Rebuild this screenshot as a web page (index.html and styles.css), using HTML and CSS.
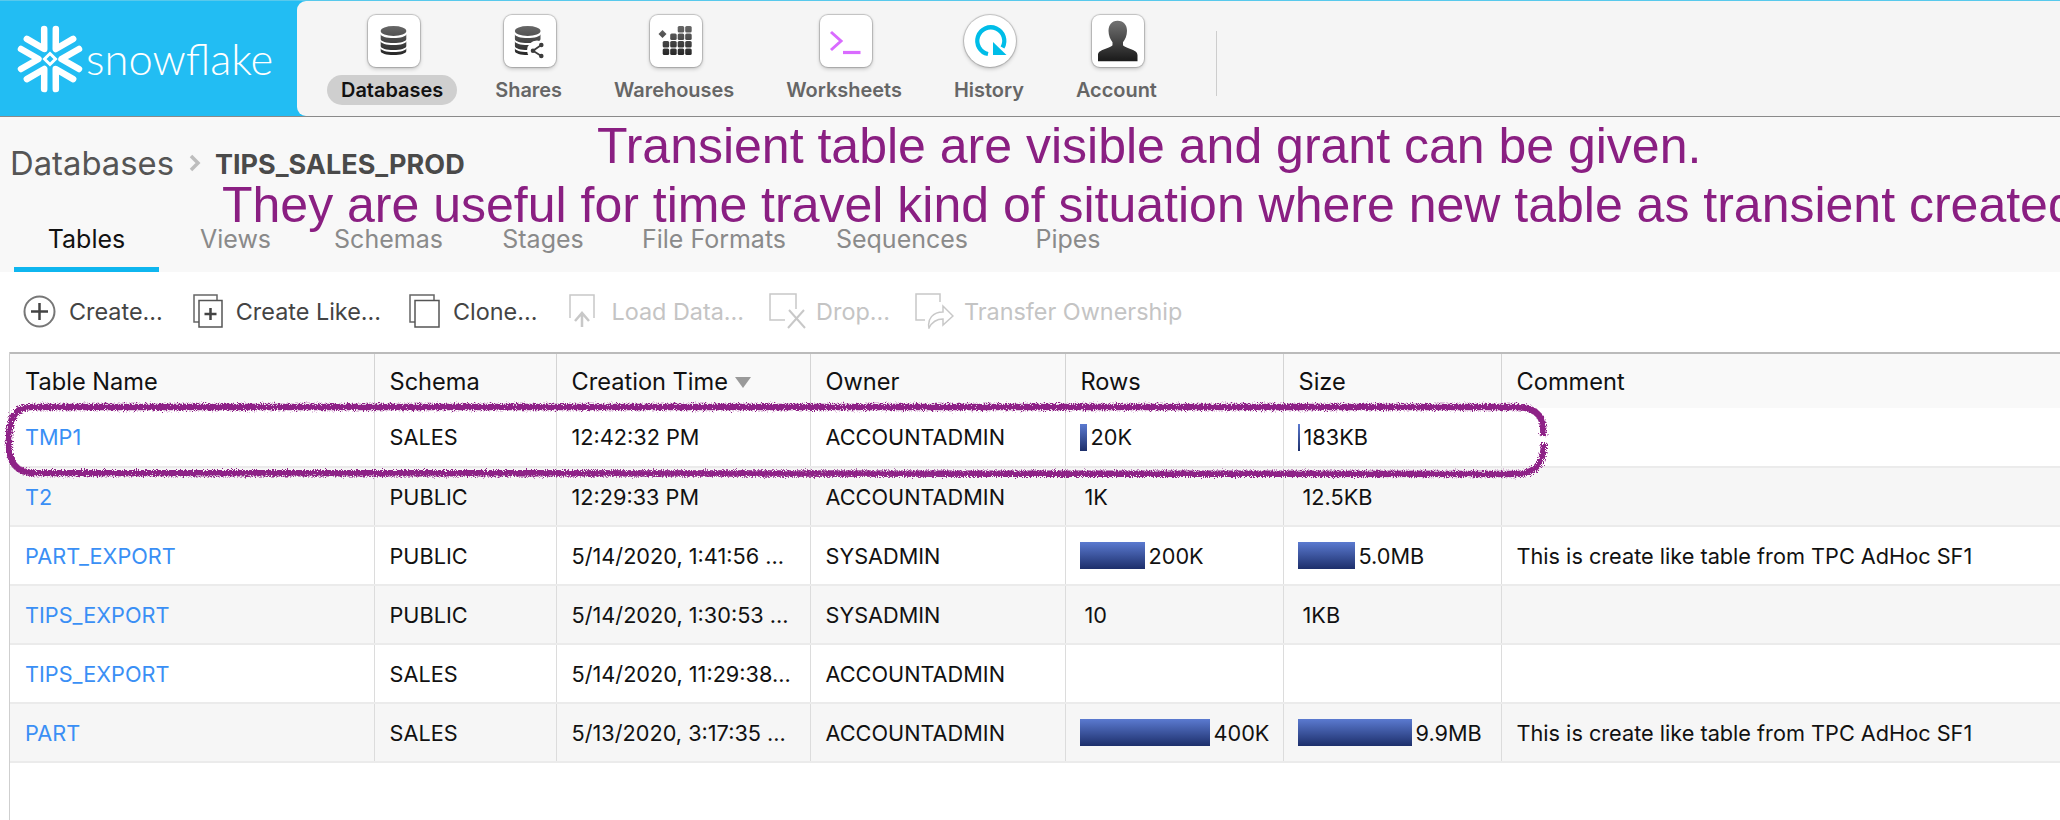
FILE: index.html
```html
<!DOCTYPE html>
<html>
<head>
    <title>Snowflake - Databases</title>
    <link rel="stylesheet" href="styles.css">
</head>
<body>
    <div class="topbar">
        <div class="logo">
            <svg class="logo-mark" viewBox="0 0 70 70" width="70" height="70">
                <g class="flake">
                    <path id="arm" d="M6 25 L23.500 35 L6 45"/>
                    <path d="M6 25 L23.500 35 L6 45" transform="rotate(60 35 35)"/>
                    <path d="M6 25 L23.500 35 L6 45" transform="rotate(120 35 35)"/>
                    <path d="M6 25 L23.500 35 L6 45" transform="rotate(180 35 35)"/>
                    <path d="M6 25 L23.500 35 L6 45" transform="rotate(240 35 35)"/>
                    <path d="M6 25 L23.500 35 L6 45" transform="rotate(300 35 35)"/>
                </g>
                <path class="flake-core" d="M35 29.500 L40.500 35 L35 40.500 L29.500 35 Z"/>
            </svg>
            <span class="logo-text">snowflake</span>
        </div>
        <div class="nav">
            <div class="nav-item active">
                <div class="nav-icon">
                    <svg viewBox="0 0 52 52" width="52" height="52">
                        <defs>
                            <linearGradient id="dark" gradientUnits="userSpaceOnUse" x1="0" y1="8" x2="0" y2="44">
                                <stop offset="0" stop-color="#6e6e6e"/>
                                <stop offset="1" stop-color="#1e1e1e"/>
                            </linearGradient>
                        </defs>
                        <g fill="url(#dark)">
                            <ellipse cx="25.500" cy="16" rx="12.800" ry="5"/>
                            <path d="M12.700 19 c0 2.500 5.700 4 12.800 4 s12.800-1.500 12.800-4 v5 c0 2.500-5.700 4-12.800 4 s-12.800-1.500-12.800-4z"/>
                            <path d="M12.700 26 c0 2.500 5.700 4 12.800 4 s12.800-1.500 12.800-4 v5 c0 2.500-5.700 4-12.800 4 s-12.800-1.500-12.800-4z"/>
                            <path d="M12.700 33 c0 2.500 5.700 4 12.800 4 s12.800-1.500 12.800-4 v3 c0 2.500-5.700 4-12.800 4 s-12.800-1.500-12.800-4z"/>
                        </g>
                    </svg>
                </div>
                <span class="nav-label">Databases</span>
            </div>
            <div class="nav-item">
                <div class="nav-icon">
                    <svg viewBox="0 0 52 52" width="52" height="52">
                        <g fill="url(#dark)">
                            <ellipse cx="23.700" cy="16" rx="12.800" ry="5"/>
                            <path d="M10.900 19 c0 2.500 5.700 4 12.800 4 s12.800-1.500 12.800-4 v5 c0 2.500-5.700 4-12.800 4 s-12.800-1.500-12.800-4z"/>
                            <path d="M10.900 26 c0 2.500 5.700 4 12.800 4 s12.800-1.500 12.800-4 v5 c0 2.500-5.700 4-12.800 4 s-12.800-1.500-12.800-4z"/>
                            <path d="M10.900 33 c0 2.500 5.700 4 12.800 4 s12.800-1.500 12.800-4 v3 c0 2.500-5.700 4-12.800 4 s-12.800-1.500-12.800-4z"/>
                        </g>
                        <circle cx="33" cy="35.500" r="10" fill="#fff"/>
                        <path d="M37.300 30 L29 35.700 L37.300 41" fill="none" stroke="#3c3c3c" stroke-width="1.800"/>
                        <circle cx="29" cy="35.700" r="2.300" fill="#3c3c3c"/>
                        <circle cx="37.300" cy="30" r="2.300" fill="#3c3c3c"/>
                        <circle cx="37.300" cy="41" r="2.300" fill="#3c3c3c"/>
                    </svg>
                </div>
                <span class="nav-label">Shares</span>
            </div>
            <div class="nav-item">
                <div class="nav-icon">
                    <svg viewBox="0 0 52 52" width="52" height="52">
                        <g fill="url(#dark)">
                            <rect x="27.700" y="11" width="6.500" height="6.500" rx="1.500"/>
                            <rect x="35.200" y="11" width="6.500" height="6.500" rx="1.500"/>
                            <path d="M12.500 15 L16.500 19 L12.500 23 L8.500 19 Z"/>
                            <rect x="20.200" y="18.500" width="6.500" height="6.500" rx="1.500"/>
                            <rect x="27.700" y="18.500" width="6.500" height="6.500" rx="1.500"/>
                            <rect x="35.200" y="18.500" width="6.500" height="6.500" rx="1.500"/>
                            <rect x="12.700" y="26" width="6.500" height="6.500" rx="1.500"/>
                            <rect x="20.200" y="26" width="6.500" height="6.500" rx="1.500"/>
                            <rect x="27.700" y="26" width="6.500" height="6.500" rx="1.500"/>
                            <rect x="35.200" y="26" width="6.500" height="6.500" rx="1.500"/>
                            <rect x="12.700" y="33.500" width="6.500" height="6.500" rx="1.500"/>
                            <rect x="20.200" y="33.500" width="6.500" height="6.500" rx="1.500"/>
                            <rect x="27.700" y="33.500" width="6.500" height="6.500" rx="1.500"/>
                            <rect x="35.200" y="33.500" width="6.500" height="6.500" rx="1.500"/>
                        </g>
                    </svg>
                </div>
                <span class="nav-label">Warehouses</span>
            </div>
            <div class="nav-item">
                <div class="nav-icon">
                    <svg viewBox="0 0 52 52" width="52" height="52">
                        <path d="M11 17 L21 26 L11 35" fill="none" stroke="#d96bff" stroke-width="3"/>
                        <path d="M23 37.500 H40.500" fill="none" stroke="#d96bff" stroke-width="3.200"/>
                    </svg>
                </div>
                <span class="nav-label">Worksheets</span>
            </div>
            <div class="nav-item">
                <div class="nav-icon round">
                    <svg viewBox="0 0 52 52" width="52" height="52">
                        <path d="M24 39 A13.500 13.500 0 1 1 38.500 32.500" fill="none" stroke="#00bde8" stroke-width="4.300"/>
                        <path d="M29 27 L42.500 40 L29 40 Z" fill="#00bde8"/>
                    </svg>
                </div>
                <span class="nav-label">History</span>
            </div>
            <div class="nav-item">
                <div class="nav-icon">
                    <svg viewBox="0 0 52 52" width="52" height="52">
                        <path fill="url(#dark)" d="M25.500 5.700 c-6 0-9 4.500-9 10 c0 5 2 9 4 11.500 v3 c-2 3-15 4-14.500 10 v6 h39.500 v-6 c.5-6-12.500-7-14.500-10 v-3 c2-2.500 4-6.500 4-11.500 c0-5.500-3-10-9.500-10z"/>
                    </svg>
                </div>
                <span class="nav-label">Account</span>
            </div>
            <div class="nav-divider"></div>
        </div>
    </div>

    <div class="subhead">
        <div class="breadcrumb">
            <span class="crumb-root">Databases</span>
            <svg class="crumb-arrow" viewBox="0 0 12 18" width="12" height="18">
                <path d="M2 2 L9 9 L2 16" fill="none" stroke="#bdbdbd" stroke-width="3.500"/>
            </svg>
            <span class="crumb-name">TIPS_SALES_PROD</span>
        </div>
        <div class="tabs">
            <div class="tab active">Tables</div>
            <div class="tab">Views</div>
            <div class="tab">Schemas</div>
            <div class="tab">Stages</div>
            <div class="tab">File Formats</div>
            <div class="tab">Sequences</div>
            <div class="tab">Pipes</div>
        </div>
    </div>

    <div class="toolbar">
        <div class="tool">
            <svg viewBox="0 0 33 33" width="33" height="33">
                <circle cx="16.500" cy="16.500" r="15" fill="none" stroke="#777" stroke-width="2"/>
                <path d="M16.500 8 V25 M8 16.500 H25" stroke="#444" stroke-width="2.500"/>
            </svg>
            <span>Create...</span>
        </div>
        <div class="tool">
            <svg viewBox="0 0 30 34" width="30" height="34">
                <path d="M24 6 V1 H1 V28 H6" fill="none" stroke="#666" stroke-width="1.500"/>
                <rect x="6" y="6.500" width="23" height="26.500" fill="#fff" stroke="#555" stroke-width="1.500"/>
                <path d="M17.500 14 V26 M11.500 20 H23.500" stroke="#444" stroke-width="2.500"/>
            </svg>
            <span>Create Like...</span>
        </div>
        <div class="tool">
            <svg viewBox="0 0 31 34" width="31" height="34">
                <path d="M25 6 V1 H1 V28 H6" fill="none" stroke="#666" stroke-width="1.500"/>
                <rect x="6" y="6.500" width="24" height="26.500" fill="#fff" stroke="#555" stroke-width="1.500"/>
            </svg>
            <span>Clone...</span>
        </div>
        <div class="tool disabled">
            <svg viewBox="0 0 26 34" width="26" height="34">
                <path d="M1 24 V1 H25 V24" fill="none" stroke="#c8c8c8" stroke-width="1.500"/>
                <path d="M13 33 V20 M6 27 L13 19 L20 27" fill="none" stroke="#c8c8c8" stroke-width="2.500"/>
            </svg>
            <span>Load Data...</span>
        </div>
        <div class="tool disabled">
            <svg viewBox="0 0 37 36" width="37" height="36">
                <path d="M27 16 V1 H1 V27 H16" fill="none" stroke="#c8c8c8" stroke-width="1.500"/>
                <path d="M20 17 L36 35 M35 17 L19 35" fill="none" stroke="#c8c8c8" stroke-width="2"/>
            </svg>
            <span>Drop...</span>
        </div>
        <div class="tool disabled">
            <svg viewBox="0 0 39 36" width="39" height="36">
                <path d="M25 9 V1 H1 V27 H10" fill="none" stroke="#c8c8c8" stroke-width="1.500"/>
                <path d="M14 35 C12 26 18 19 28 19 V13 L38 23 L28 32 V26 C21 26 17 29 14 35 Z" fill="#fff" stroke="#c8c8c8" stroke-width="1.500"/>
            </svg>
            <span>Transfer Ownership</span>
        </div>
    </div>

    <div class="table-wrap">
        <table class="tables">
            <colgroup>
                <col class="col-name">
                <col class="col-schema">
                <col class="col-time">
                <col class="col-owner">
                <col class="col-num">
                <col class="col-num">
                <col>
            </colgroup>
            <thead>
                <tr>
                    <th>Table Name</th>
                    <th>Schema</th>
                    <th>Creation Time <span class="sort-arrow"></span></th>
                    <th>Owner</th>
                    <th>Rows</th>
                    <th>Size</th>
                    <th>Comment</th>
                </tr>
            </thead>
            <tbody>
                <tr>
                    <td><a href="#">TMP1</a></td>
                    <td>SALES</td>
                    <td>12:42:32 PM</td>
                    <td>ACCOUNTADMIN</td>
                    <td class="num"><div class="bar-cell"><div class="bar" style="width: 7px"></div>20K</div></td>
                    <td class="num"><div class="bar-cell"><div class="bar" style="width: 2px"></div>183KB</div></td>
                    <td></td>
                </tr>
                <tr>
                    <td><a href="#">T2</a></td>
                    <td>PUBLIC</td>
                    <td>12:29:33 PM</td>
                    <td>ACCOUNTADMIN</td>
                    <td class="num plain">1K</td>
                    <td class="num plain">12.5KB</td>
                    <td></td>
                </tr>
                <tr>
                    <td><a href="#">PART_EXPORT</a></td>
                    <td>PUBLIC</td>
                    <td>5/14/2020, 1:41:56 ...</td>
                    <td>SYSADMIN</td>
                    <td class="num"><div class="bar-cell"><div class="bar" style="width: 65px"></div>200K</div></td>
                    <td class="num"><div class="bar-cell"><div class="bar" style="width: 57px"></div>5.0MB</div></td>
                    <td>This is create like table from TPC AdHoc SF1</td>
                </tr>
                <tr>
                    <td><a href="#">TIPS_EXPORT</a></td>
                    <td>PUBLIC</td>
                    <td>5/14/2020, 1:30:53 ...</td>
                    <td>SYSADMIN</td>
                    <td class="num plain">10</td>
                    <td class="num plain">1KB</td>
                    <td></td>
                </tr>
                <tr>
                    <td><a href="#">TIPS_EXPORT</a></td>
                    <td>SALES</td>
                    <td>5/14/2020, 11:29:38...</td>
                    <td>ACCOUNTADMIN</td>
                    <td></td>
                    <td></td>
                    <td></td>
                </tr>
                <tr>
                    <td><a href="#">PART</a></td>
                    <td>SALES</td>
                    <td>5/13/2020, 3:17:35 ...</td>
                    <td>ACCOUNTADMIN</td>
                    <td class="num"><div class="bar-cell"><div class="bar" style="width: 130px"></div>400K</div></td>
                    <td class="num"><div class="bar-cell"><div class="bar" style="width: 114px"></div>9.9MB</div></td>
                    <td>This is create like table from TPC AdHoc SF1</td>
                </tr>
            </tbody>
        </table>
    </div>

    <!-- annotation drawn over the screenshot -->
    <div class="note note-one">Transient table are visible and grant can be given.</div>
    <div class="note note-two">They are useful for time travel kind of situation where new table as transient created</div>
    <svg class="scribble" viewBox="0 0 2060 820" width="2060" height="820">
        <defs>
            <filter id="rough" filterUnits="userSpaceOnUse" x="0" y="0" width="2060" height="820">
                <feTurbulence type="fractalNoise" baseFrequency="0.9" numOctaves="2" seed="4"/>
                <feDisplacementMap in="SourceGraphic" scale="7"/>
            </filter>
        </defs>
        <path d="M1543 436 C1545 418 1538 408 1518 407 L30 407 C13 408 9 420 9 440 C8 460 14 472 32 473 L1518 474 C1537 473 1544 462 1544 443" fill="none" stroke="#8e2387" stroke-width="6.500" filter="url(#rough)"/>
    </svg>
</body>
</html>
```

FILE: styles.css
```css
html, body {
    margin: 0;
    height: 820px;
    overflow: hidden;
}

body {
    position: relative;
    font-family: "Inter", "Liberation Sans", sans-serif;
    background-color: #fff;
    color: #111;
}

/* top bar */
.topbar {
    display: flex;
    height: 115px;
    background-color: #22bdf3;
    border-top: 1px solid #58c9ec;
    border-bottom: 1px solid #8a8a8a;
}

.logo {
    display: flex;
    align-items: center;
    width: 297px;
    flex-shrink: 0;
    padding-left: 15px;
    box-sizing: border-box;
    color: #fff;
}

.logo-mark {
    flex-shrink: 0;
}

.flake path {
    fill: none;
    stroke: #fff;
    stroke-width: 6.500;
    stroke-linecap: round;
    stroke-linejoin: round;
}

.flake-core {
    fill: none;
    stroke: #fff;
    stroke-width: 3;
}

.logo-text {
    font-family: "Lato", sans-serif;
    font-weight: 300;
    font-size: 43.500px;
    margin-left: 1px;
    margin-top: -2px;
}

.nav {
    display: flex;
    flex: 1;
    gap: 24px;
    padding: 14px 0 0 30px;
    background-color: #f5f5f5;
    border-radius: 9px 0 0 9px;
}

.nav-item {
    display: flex;
    flex-direction: column;
    align-items: center;
}

.nav-icon {
    width: 52px;
    height: 52px;
    margin-left: 3px;
    background-color: #fff;
    border-radius: 8px;
    box-shadow: 0 0 1px 1px rgba(0, 0, 0, 0.2), 0 2px 4px rgba(0, 0, 0, 0.2);
}

.nav-icon.round {
    border-radius: 50%;
}

.nav-label {
    margin-top: 8px;
    padding: 0 14px;
    height: 30px;
    line-height: 30px;
    border-radius: 15px;
    font-size: 19.950px;
    font-weight: 600;
    color: #666;
}

.nav-item.active .nav-label {
    background-color: #cfcfcf;
    color: #111;
}

.nav-divider {
    width: 1px;
    height: 65px;
    margin: 16px 0 0 21px;
    background-color: #cdcdcd;
}

/* breadcrumb and tabs */
.subhead {
    display: flex;
    flex-direction: column;
    height: 155px;
    background-color: #f8f8f8;
}

.breadcrumb {
    display: flex;
    align-items: center;
    height: 92px;
    padding-left: 10px;
}

.crumb-root {
    font-size: 32.800px;
    color: #555;
}

.crumb-arrow {
    margin: 0 14px 0 15px;
}

.crumb-name {
    font-size: 27px;
    font-weight: 700;
    color: #4a4a4a;
    margin-top: 2px;
}

.tabs {
    display: grid;
    grid-template-columns: 145px 153px 153px 156px 186px 190px 142px;
    width: max-content;
    margin: auto 0 0 14px;
}

.tab {
    height: 58px;
    line-height: 50px;
    text-align: center;
    font-size: 25px;
    color: #8a8a8a;
}

.tab.active {
    color: #111;
    border-bottom: 5px solid #0fb6ef;
    box-sizing: border-box;
}

/* toolbar */
.toolbar {
    display: flex;
    align-items: center;
    gap: 28px;
    height: 80px;
    padding: 0 0 2px 23px;
    box-sizing: border-box;
}

.tool {
    display: flex;
    align-items: center;
    gap: 13px;
    font-size: 23.400px;
    color: #444;
}

.tool:nth-child(2) {
    margin-left: 2px;
}

.tool:nth-child(4) {
    margin-left: 4px;
}

.tool:nth-child(4) svg {
    margin-right: 3px;
}

.tool:nth-child(5) {
    margin-left: -3px;
}

.tool:nth-child(5) svg,
.tool:nth-child(6) svg {
    margin-right: -3px;
}

.tool:nth-child(6) {
    margin-left: -3px;
}

.tool.disabled {
    color: #c4c4c4;
}

/* table */
.table-wrap {
    margin-left: 9px;
    height: 468px;
    border-left: 1px solid #cfcfcf;
}

.tables {
    width: 2051px;
    table-layout: fixed;
    border-collapse: collapse;
    font-size: 21.700px;
}

.col-name { width: 364px; }
.col-schema { width: 182px; }
.col-time { width: 254px; }
.col-owner { width: 255px; }
.col-num { width: 218px; }

.tables th {
    height: 55px;
    padding: 0 15px;
    text-align: left;
    font-size: 23.600px;
    font-weight: 400;
    background-color: #f9f9f9;
    border-top: 2px solid #bbb;
    border-right: 1px solid #d4d4d4;
    box-sizing: border-box;
}

.tables td {
    height: 59px;
    padding: 0 15px;
    border-right: 1px solid #dcdcdc;
    border-bottom: 2px solid #ebebeb;
    white-space: nowrap;
    overflow: hidden;
    box-sizing: border-box;
}

.tables tbody tr:nth-child(even) td {
    background-color: #f6f6f6;
}

.tables a {
    color: #3a8ff5;
    text-decoration: none;
}

.sort-arrow {
    display: inline-block;
    width: 0;
    height: 0;
    border-left: 8px solid transparent;
    border-right: 8px solid transparent;
    border-top: 11px solid #9a9a9a;
    margin-bottom: 2px;
}

.tables td.num {
    padding: 0 0 0 14px;
}

.tables td.plain {
    padding-left: 19px;
}

.bar-cell {
    display: flex;
    align-items: center;
    gap: 4px;
}

.bar {
    height: 27px;
    background: linear-gradient(#5b7ad0, #1d2f6b);
    flex-shrink: 0;
}

/* annotation on top of the page */
.note {
    position: absolute;
    font-family: "Liberation Sans", Arial, sans-serif;
    font-size: 50px;
    line-height: 56px;
    color: #8a1f82;
    white-space: nowrap;
}

.note-one {
    left: 597px;
    top: 118px;
}

.note-two {
    left: 222px;
    top: 177px;
}

.scribble {
    position: absolute;
    left: 0;
    top: 0;
    pointer-events: none;
}
```
